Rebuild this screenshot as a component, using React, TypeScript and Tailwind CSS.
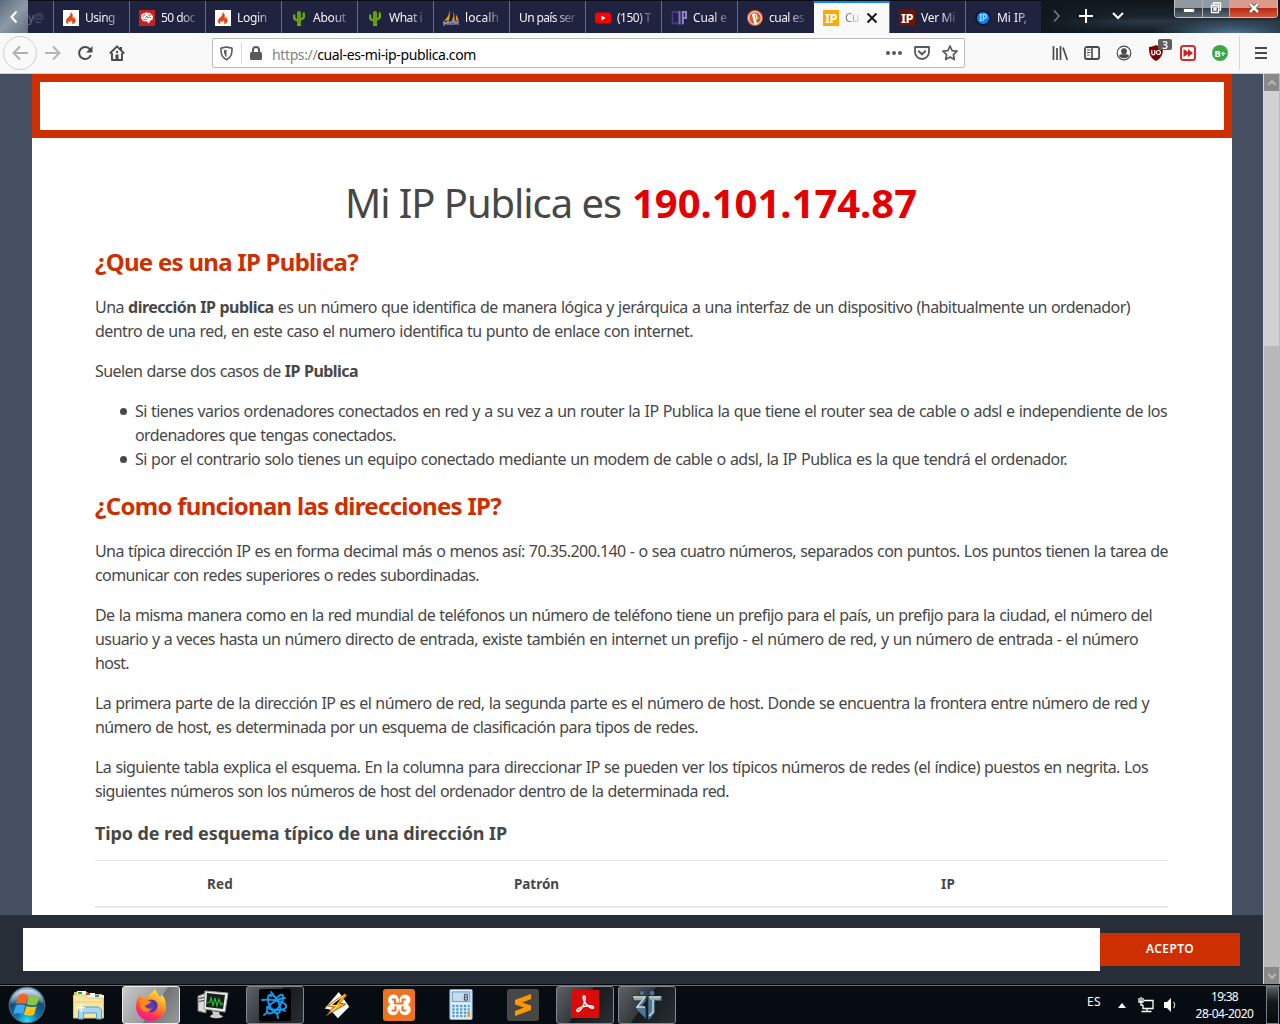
import { useLayoutEffect, useRef, type ReactNode } from "react";

/* One line of text whose tracking is adjusted so that it fills `w` pixels. */
function Line({ w, className = "", children }: { w: number; className?: string; children: ReactNode }) {
  const ref = useRef<HTMLSpanElement>(null);
  useLayoutEffect(() => {
    const el = ref.current;
    if (!el) return;
    el.style.letterSpacing = "0px";
    const natural = el.getBoundingClientRect().width;
    const count = (el.textContent || "").length;
    el.style.letterSpacing = `${(w - natural) / count}px`;
  }, [w]);
  return (
    <span className={`block whitespace-nowrap ${className}`}>
      <span ref={ref} className="relative -top-px inline-block">{children}</span>
    </span>
  );
}

function Flame() {
  return (
    <svg viewBox="0 0 16 16" className="size-4">
      <path fill="#fff" d="M0 0h16v16H0z" />
      <path fill="#dd4814" d="M7.3 2c.8 1.700.2 2.800-1 4.200-1.500 1.700-3.300 2.800-3.300 5 0 1.700 1.200 2.600 2.700 3-1.100-1.200-.6-2.500.5-3.400-.2 1.200.5 1.600 1.100 1.400.9-.3.400-1.300.3-1.900 1.500.6 2.700 2.500 1.300 3.900 2-.5 3.600-1.500 3.700-3.300.1-1.600-1.300-2.500-1.200-4.300-.9.400-1.100 1.300-1 2.100-1-.4-.7-1.500-.6-2.600.1-1.800-.8-3.300-2.500-4.100z" />
    </svg>
  );
}
function Brain() {
  return (
    <svg viewBox="0 0 16 16" className="size-4">
      <path fill="#c9211e" d="M0 0h16v16H0z" />
      <path fill="#fff" d="M4 3.500 7 2.500l4 .5 3 3-.4 3.500L11 11l-1 2.500-2-2-4-.5L2 8l.3-3z" />
      <path fill="none" stroke="#c9211e" strokeWidth=".7" d="M3 6h2l1-2m0 4 2-2 1 2 2-1 1 1M4 9l2 .5L8 9m1-5 1 1.500L12 5" />
    </svg>
  );
}
function Cactus() {
  return (
    <svg viewBox="0 0 16 16" className="size-4">
      <g fill="none" stroke="#6ea80a" strokeLinecap="round">
        <path strokeWidth="4" d="M8 3v10" />
        <path strokeWidth="2.400" d="M3.200 5.500V8c0 1.500 1.500 2 4 2.400M12.800 3.500V7c0 1.500-1.500 2-4 2.500" />
      </g>
      <path stroke="#3c7a10" strokeWidth=".4" d="M7.300 2v12M9 2v12" />
      <path fill="#6ea80a" d="M6 14h4v2H6z" />
    </svg>
  );
}
function Sails() {
  return (
    <svg viewBox="0 0 16 16" className="size-4">
      <path fill="#f89c0e" d="M6.500 0C6.500 4 4.500 8 1 11l5-1c1-4 1-8 .5-10zM10 1c1 4 .5 7-1.500 10l3-.5c.3-3-.2-7-1.500-9.500zM12.500 4c.8 2 .8 4 .2 6h2.600c-.3-2-1.300-4.500-2.800-6z" />
      <path fill="none" stroke="#9a9ab5" strokeWidth="1.200" d="M1 16v-4l2 2 2-3v4m2 0v-3h2v3m2 0v-4l2 3 2-3v4M0 13l15-2" />
    </svg>
  );
}
function YouTube() {
  return (
    <svg viewBox="0 0 16 16" className="size-4">
      <rect y="2.500" width="16" height="11" rx="3" fill="#f00" />
      <path fill="#fff" d="m6.500 5.500 4 2.500-4 2.500z" />
    </svg>
  );
}
function Cip() {
  return (
    <svg viewBox="0 0 16 16" className="size-4">
      <path fill="none" stroke="#4a3991" strokeWidth="1.500" d="M6 4V1.700H1.500v11.800H6v-2" />
      <path fill="none" stroke="#8375c4" strokeWidth="2" d="M8.500 1v13.500" />
      <path fill="none" stroke="#8f83ca" strokeWidth="2" d="M11.800 14.500V2H15v6h-3" />
    </svg>
  );
}
function Duck() {
  return (
    <svg viewBox="0 0 16 16" className="size-4">
      <circle cx="8" cy="8" r="8" fill="#de5833" />
      <circle cx="8" cy="8" r="6.300" fill="none" stroke="#fff" />
      <path fill="#fff" d="M5 4.500C6 3 9 3 10 5l.5 3-1 2 1 3.500-3 .5L6 9z" />
      <path fill="#fdb913" d="M8 7.500h4l-1 1.500H8z" />
      <path fill="#43a047" d="m9 10 3 .2-.5 2L9 11.500z" />
      <circle cx="8.500" cy="6" r=".7" fill="#234" />
    </svg>
  );
}

function IpBox({ className }: { className: string }) {
  return (
    <span className={`flex size-4 items-center justify-center text-[13px] leading-none font-bold text-white ${className}`}>
      <span className="tracking-[-0.5px]">IP</span>
    </span>
  );
}

function Tab({ icon, title, w, active = false }: { icon?: ReactNode; title: string; w: number; active?: boolean }) {
  return (
    <div
      className={
        active
          ? "flex w-[76px] shrink-0 items-center border-t-2 border-l border-t-[#0a84ff] border-l-[#202340] bg-[#f9f9fa] pl-[9px] text-[#555]"
          : "flex w-[76px] shrink-0 items-center border-l border-[#6b6b80] bg-[#202340] pt-0.5 pl-[9px] text-[#f4f4f8]"
      }
    >
      {icon && <span className="mr-1.5 shrink-0">{icon}</span>}
      <span
        className={
          active
            ? "w-[15px] pt-0.5 [mask-image:linear-gradient(to_right,#000c,#0003)]"
            : icon
              ? "mr-2 min-w-0 flex-1 pt-0.5 [mask-image:linear-gradient(to_right,#000_55%,#0002)]"
              : "mr-2 min-w-0 flex-1 pt-0.5 [mask-image:linear-gradient(to_right,#000_60%,#0002)]"
        }
      >
        <Line w={w} className="text-[12px] leading-4">{title}</Line>
      </span>
      {active && (
        <svg viewBox="0 0 12 12" className="ml-1.5 size-3 shrink-0">
          <path stroke="#111" strokeWidth="1.800" d="m1.500 1.500 9 9m0-9-9 9" />
        </svg>
      )}
    </div>
  );
}

function TitleBar() {
  return (
    <div className="flex h-[33px] items-end bg-[#10141e]">
      <div className="flex h-[33px] w-7 items-center justify-center bg-[linear-gradient(135deg,#5c6b7d,#8e9aa9_50%,#646d79)]">
        <svg viewBox="0 0 10 14" className="h-3.5 w-2.5"><path fill="none" stroke="#fff" strokeWidth="2" d="M7.500 1.500 2.500 7l5 5.500" /></svg>
      </div>
      <div className="flex h-full flex-1 flex-col">
        <div className="h-px bg-[#0a0d14]" />
        <div className="flex h-8 [&>*]:h-8">
          <div className="flex w-[25px] items-center bg-[#202340] pt-[3px] text-[12px] leading-4 text-[#6b6c82]">
            <Line w={15}>y<span className="text-[#4f5069]">@</span></Line>
          </div>
          <Tab icon={<Flame />} title="Using" w={30} />
          <Tab icon={<Brain />} title="50 doc" w={34} />
          <Tab icon={<Flame />} title="Login" w={30} />
          <Tab icon={<Cactus />} title="About" w={33} />
          <Tab icon={<Cactus />} title="What i" w={33} />
          <Tab icon={<Sails />} title="localh" w={34} />
          <Tab title="Un país ser" w={56} />
          <Tab icon={<YouTube />} title="(150) T" w={34} />
          <Tab icon={<Cip />} title="Cual e" w={34} />
          <Tab icon={<Duck />} title="cual es" w={35} />
          <Tab icon={<IpBox className="bg-[#fbab00]" />} title="Cu" w={14} active />
          <Tab icon={<IpBox className="bg-[#6b1602]" />} title="Ver Mi" w={34} />
          <Tab
            icon={
              <span className="flex size-4 items-center justify-center rounded-full border-2 border-[#111827] bg-[#0a84ff] text-[8px] leading-none text-white">IP</span>
            }
            title="Mi IP,"
            w={30}
          />
          <div className="-mt-px flex !h-[33px] flex-1 items-center bg-[radial-gradient(ellipse_at_80%_100%,#4d7595_0%,transparent_30%),linear-gradient(to_right,#10181f,transparent_40%),linear-gradient(to_bottom,#10151c,#1a242d_50%,#2a3742_65%,#111920)]">
            <svg viewBox="0 0 10 14" className="-mt-px ml-[11px] h-3.5 w-2.5"><path fill="none" stroke="#777c83" strokeWidth="1.600" d="m2 1.500 5 5.500-5 5.500" /></svg>
            <svg viewBox="0 0 14 14" className="-mt-px ml-[17px] size-3.5"><path stroke="#fff" strokeWidth="2" d="M7 0v14M0 7h14" /></svg>
            <svg viewBox="0 0 14 10" className="-mt-px ml-[18px] h-2.5 w-3.5"><path fill="none" stroke="#fff" strokeWidth="2" d="m2 2 5 5 5-5" /></svg>
            <div className="ml-[49px] flex h-[18px] self-start overflow-hidden rounded-b-[4px] border border-t-0 border-[#bcc2c8]">
              <div className="flex w-[28px] items-center justify-center border-r border-[#aab0b6] bg-[linear-gradient(to_bottom,#9199a1_50%,#303b45_50%,#5b6771)]">
                <span className="mt-1 h-[5px] w-3 rounded-[1px] border border-[#555] bg-white" />
              </div>
              <div className="flex w-[27px] items-center justify-center border-r border-[#aab0b6] bg-[linear-gradient(to_bottom,#9199a1_50%,#303b45_50%,#5b6771)]">
                <svg viewBox="0 0 12 12" className="-mt-px size-3"><path fill="none" stroke="#fff" strokeWidth="1.400" d="M3.500 2.500V1h7v7H9M1.500 3.500h7v7h-7zM4 6h2v2H4z" /></svg>
              </div>
              <div className="flex w-[47px] items-center justify-center bg-[linear-gradient(to_bottom,#dc9a8c_48%,#b82b14_50%,#d5553a)]">
                <svg viewBox="0 0 12 10" className="-mt-0.5 h-2.5 w-3"><path stroke="#54393a" strokeWidth="4" d="m2 1 8 8m0-8L2 9" /><path stroke="#fff" strokeWidth="2.500" d="m2 1 8 8m0-8L2 9" /></svg>
              </div>
            </div>
          </div>
        </div>
      </div>
    </div>
  );
}

function Toolbar() {
  return (
    <div className="flex h-[41px] items-center border-b border-[#d0d0d0] bg-[#f9f9fa]">
      <div className="ml-[3px] flex size-[34px] items-center justify-center rounded-full border border-[#cfcfd0]">
        <svg viewBox="0 0 16 16" className="size-4"><path fill="none" stroke="#b0b0b0" strokeWidth="1.900" d="M16 8H1.500M8 1.500 1.500 8 8 14.500" /></svg>
      </div>
      <svg viewBox="0 0 16 16" className="ml-2 size-4"><path fill="none" stroke="#b5b5b5" strokeWidth="1.900" d="M0 8h14.500M8 1.500 14.500 8 8 14.500" /></svg>
      <svg viewBox="0 0 16 16" className="ml-4 size-4"><path fill="none" stroke="#4a4a4c" strokeWidth="2" d="M13 4.500A6 6 0 1 0 13.800 10" /><path fill="#4a4a4c" d="M15.500 1v6.500H9z" /></svg>
      <svg viewBox="0 0 16 16" className="ml-4 size-4">
        <path fill="none" stroke="#4a4a4c" strokeWidth="1.900" strokeLinejoin="round" d="M.8 8.500 8 1.300l7.200 7.200M3 8v7h10V8" />
        <path fill="#4a4a4c" d="M6.500 9.500h3V15h-3zM11 2h2v3h-2zM7 6h2v2H7z" />
      </svg>
      <div className="ml-[87px] flex h-[30px] w-[753px] items-center rounded-[2px] border border-[#bbb] bg-white">
        <svg viewBox="0 0 14 16" className="ml-[7px] h-[15px] w-[13px]"><path fill="none" stroke="#5a5a5c" strokeWidth="1.700" strokeLinejoin="round" d="M1 2.300C3 1.800 5 1.500 7 1c2 .5 4 .8 6 1.300 0 6-.8 10-6 12.500C1.800 12.300 1 8.300 1 2.300z" /><path fill="#5a5a5c" d="M7 4v8c-2.200-1.700-2.800-4-2.900-7.400z" /></svg>
        <div className="ml-2 h-[22px] w-px bg-[#ddd]" />
        <svg viewBox="0 0 12 14" className="ml-2 h-3.5 w-3"><rect y="6" width="12" height="8" rx="1.500" fill="#5a5a5c" /><path fill="none" stroke="#5a5a5c" strokeWidth="2" d="M3 7V4a3 3 0 0 1 6 0v3" /></svg>
        <span className="ml-[10px] w-[204px] pt-[5px] text-[14px] leading-5 text-black">
          <Line w={204}><span className="text-[#838386]">https://</span>cual-es-mi-ip-publica.com</Line>
        </span>
        <div className="ml-[410px] flex w-4 justify-between [&>i]:size-1 [&>i]:rounded-full [&>i]:bg-[#5a5a5c]"><i /><i /><i /></div>
        <svg viewBox="0 0 16 16" className="ml-3 size-4"><path fill="none" stroke="#5a5a5c" strokeWidth="1.800" strokeLinejoin="round" d="M1 2h14v5a7 7 0 0 1-14 0z" /><path fill="none" stroke="#5a5a5c" strokeWidth="2" strokeLinecap="round" d="m4.800 6.300 3.200 3 3.200-3" /></svg>
        <svg viewBox="0 0 16 16" className="ml-3 size-4"><path fill="none" stroke="#5a5a5c" strokeWidth="1.700" strokeLinejoin="round" d="m8 1 2.100 4.600 5 .6-3.700 3.400 1 5L8 12.100l-4.400 2.500 1-5L.9 6.200l5-.6z" /></svg>
      </div>
      <svg viewBox="0 0 16 16" className="ml-[87px] size-4"><path fill="none" stroke="#4a4a4c" strokeWidth="1.700" d="M1.500 1v14M5 3v12M8.500 1v14M11 2.500l4.300 12.500" /></svg>
      <svg viewBox="0 0 16 16" className="ml-4 size-4"><rect x=".9" y="2" width="14.200" height="12" rx="2" fill="none" stroke="#4a4a4c" strokeWidth="1.800" /><path stroke="#4a4a4c" strokeWidth="1.600" d="M8 2v12" /><path stroke="#4a4a4c" d="M3 5h3.500M3 7.500h3.500M3 10h2.500" /></svg>
      <svg viewBox="0 0 16 16" className="ml-4 size-4"><circle cx="8" cy="8" r="6.800" fill="none" stroke="#4a4a4c" strokeWidth="1.200" /><circle cx="8" cy="6.200" r="2.900" fill="#4a4a4c" /><path fill="#4a4a4c" d="M3 11c1-2 3-1.700 5-1.700s4-.3 5 1.700c-2.500 3-7.500 3-10 0z" /></svg>
      <div className="relative ml-4 size-4">
        <svg viewBox="0 0 16 16" className="size-4"><path fill="#800000" d="M8 0c2 1 4 1.800 7 2 0 6-.5 10.500-7 14C1.500 12.500 1 8 1 2c3-.2 5-1 7-2z" /><path fill="none" stroke="#fff" strokeWidth="1.200" d="M3.800 5v3.500c0 1.800 3 1.800 3 0V5" /><circle cx="10.400" cy="7.500" r="2" fill="none" stroke="#fff" strokeWidth="1.200" /></svg>
        <span className="absolute -top-1.5 left-[10px] flex h-[11px] w-3.5 items-center justify-center rounded-[2px] bg-[#5e5e5e] text-[10px] leading-none font-semibold text-white">3</span>
      </div>
      <svg viewBox="0 0 16 16" className="ml-4 size-4"><rect x="1" y="1" width="14" height="14" rx="2.500" fill="#fff" stroke="#d32b2b" strokeWidth="2" /><path fill="#c22" d="M3.500 4 8 7V4l5 4-5 4V9l-4.500 3z" /></svg>
      <span className="ml-4 flex size-4 items-center justify-center rounded-full bg-[#3fa648] text-[9px] leading-none font-bold text-white">B+</span>
      <div className="ml-[11px] h-[34px] w-px bg-[#d6d6d6]" />
      <div className="ml-[15px] flex flex-col gap-[3px] [&>i]:h-0.5 [&>i]:w-3 [&>i]:bg-[#4a4a4c]"><i /><i /><i /></div>
    </div>
  );
}

function Bullet() {
  return <i className="mt-[8px] mr-[8px] -ml-[15px] size-[7px] shrink-0 rounded-full bg-[#474747]" />;
}

function Article() {
  return (
    <main className="ml-8 h-full w-[1200px] overflow-hidden bg-white text-[16px] leading-6 text-[#474747]">
      <div className="h-16 border-8 border-[#cd2f00]" />
      <div className="ml-[63px] w-[1073px]">
        <h1 className="flex h-[78px] items-start justify-start pt-[42px] pl-[250px] text-[40px] leading-12">
          <span className="w-[287px] shrink-0 font-normal"><Line w={276}>Mi IP Publica es</Line></span>
          <b className="font-bold text-[#e50000]"><Line w={285}>190.101.174.87</Line></b>
        </h1>
        <h2 className="mt-[29px] h-[51px] pt-[3px] text-[24px] leading-[29px] font-bold text-[#cd2f00]"><Line w={263}>¿Que es una IP Publica?</Line></h2>
        <div className="[word-spacing:0.6px]">
          <p>
            <Line w={1035}>Una <b>dirección IP publica</b> es un número que identifica de manera lógica y jerárquica a una interfaz de un dispositivo (habitualmente un ordenador)</Line>
            <Line w={598}>dentro de una red, en este caso el numero identifica tu punto de enlace con internet.</Line>
          </p>
          <p className="mt-4"><Line w={263}>Suelen darse dos casos de <b>IP Publica</b></Line></p>
          <ul className="mt-4 pl-10">
            <li className="flex">
              <Bullet />
              <div>
                <Line w={1032}>Si tienes varios ordenadores conectados en red y a su vez a un router la IP Publica la que tiene el router sea de cable o adsl e independiente de los</Line>
                <Line w={261}>ordenadores que tengas conectados.</Line>
              </div>
            </li>
            <li className="flex">
              <Bullet />
              <Line w={932}>Si por el contrario solo tienes un equipo conectado mediante un modem de cable o adsl, la IP Publica es la que tendrá el ordenador.</Line>
            </li>
          </ul>
        </div>
        <h2 className="mt-5 h-12 text-[24px] leading-[29px] font-bold text-[#cd2f00]"><Line w={406}>¿Como funcionan las direcciones IP?</Line></h2>
        <div className="[word-spacing:0.6px]">
          <p>
            <Line w={1073}>Una típica dirección IP es en forma decimal más o menos así: 70.35.200.140 - o sea cuatro números, separados con puntos. Los puntos tienen la tarea de</Line>
            <Line w={384}>comunicar con redes superiores o redes subordinadas.</Line>
          </p>
          <p className="mt-4">
            <Line w={1057}>De la misma manera como en la red mundial de teléfonos un número de teléfono tiene un prefijo para el país, un prefijo para la ciudad, el número del</Line>
            <Line w={1043}>usuario y a veces hasta un número directo de entrada, existe también en internet un prefijo - el número de red, y un número de entrada - el número</Line>
            <Line w={34}>host.</Line>
          </p>
          <p className="mt-4">
            <Line w={1054}>La primera parte de la dirección IP es el número de red, la segunda parte es el número de host. Donde se encuentra la frontera entre número de red y</Line>
            <Line w={603}>número de host, es determinada por un esquema de clasificación para tipos de redes.</Line>
          </p>
          <p className="mt-4">
            <Line w={1053}>La siguiente tabla explica el esquema. En la columna para direccionar IP se pueden ver los típicos números de redes (el índice) puestos en negrita. Los</Line>
            <Line w={634}>siguientes números son los números de host del ordenador dentro de la determinada red.</Line>
          </p>
        </div>
        <h3 className="mt-4 h-10 text-[18px] leading-7 font-bold"><Line w={412}>Tipo de red esquema típico de una dirección IP</Line></h3>
        <div className="grid h-12 grid-cols-[250px_383px_440px] items-center border-t border-b-2 border-[#e6eaed] pt-[3px] text-center text-[13.5px] font-bold">
          <Line w={26}>Red</Line>
          <Line w={45}>Patrón</Line>
          <Line w={14}>IP</Line>
        </div>
      </div>
    </main>
  );
}

function Scrollbar() {
  return (
    <div className="flex w-[17px] shrink-0 flex-col border-l border-[#d8d8d8] bg-[#b9b9b9] pr-px">
      <div className="flex h-[17px] items-center justify-center bg-[#898989]"><svg viewBox="0 0 10 8" className="h-2 w-2.5"><path fill="none" stroke="#b8b8b8" strokeWidth="2" d="m1.500 6 3.500-4 3.500 4" /></svg></div>
      <div className="h-[255px] bg-[#d1d1d1]" />
      <div className="mt-auto flex h-[17px] items-center justify-center bg-[#898989]"><svg viewBox="0 0 10 8" className="h-2 w-2.5"><path fill="none" stroke="#b8b8b8" strokeWidth="2" d="m1.500 2 3.500 4 3.500-4" /></svg></div>
    </div>
  );
}

function Slot({ children, state = "idle" }: { children: ReactNode; state?: "idle" | "open" | "active" }) {
  const look =
    state === "active"
      ? "border border-[#eee] bg-[linear-gradient(125deg,#c9cacb,#97999b_55%,#717376_56%,#97999b)]"
      : state === "open"
        ? "border border-[#84878b] bg-[linear-gradient(125deg,#5e6266,#35393e_45%,#15191e_46%,#2a2e33)]"
        : "";
  return <div className={`flex h-[38px] w-[58px] shrink-0 items-center justify-center rounded-[3px] ${look}`}>{children}</div>;
}

function Taskbar() {
  return (
    <div className="flex h-10 items-center border-t border-[#05070a] bg-[#070c12] shadow-[inset_0_1px_0_#6b7077]">
      <svg viewBox="0 0 40 40" className="ml-2 size-[38px] shrink-0">
        <defs>
          <radialGradient id="orb" cx=".5" cy=".95" r=".9"><stop offset="0" stopColor="#19e6ff" /><stop offset=".35" stopColor="#1473a8" /><stop offset=".7" stopColor="#174a75" /><stop offset="1" stopColor="#8fb2ca" /></radialGradient>
          <linearGradient id="gloss" x2="0" y2="1"><stop stopColor="#fff" stopOpacity=".65" /><stop offset="1" stopColor="#fff" stopOpacity=".1" /></linearGradient>
        </defs>
        <circle cx="20" cy="20" r="18.800" fill="url(#orb)" stroke="#547187" />
        <path fill="url(#gloss)" d="M3 18C4-1 36-1 37 18c-9-3-22 4-34 0z" />
        <path fill="#f26522" d="M11 10c3.500-2.800 7-2.200 10-.5L18.600 19c-3-1.500-6.500-1.500-10 0z" />
        <path fill="#8cc63f" d="M22.200 10.200c3.300 1.500 7 1.700 11 0l-2.700 9.200c-4 1.500-7.500 1.300-10.800-.2z" />
        <path fill="#3fa9f5" d="M8.200 20.500c3.500-1.500 7-1.500 10 0l-2.600 9.200c-3-1.700-6.500-1.700-10 0z" />
        <path fill="#ffc20e" d="M19.400 21c3.300 1.500 6.800 1.500 10.600.2l-2.700 9c-3.800 1.500-7 1.300-10.500-.2z" />
      </svg>
      <div className="ml-[14px] flex gap-1">
        <Slot>
          <svg viewBox="0 0 34 32" className="h-8 w-[34px]">
            <path fill="#d8bd66" d="M2 3h13l2 2h13v23H2z" /><path fill="#fff" d="M5 2h9v6H5zm8 2h10v6H13zm10 2h9v5h-9z" />
            <path fill="#18a53b" d="M6 3h4v2H6z" /><path fill="#d33c2a" d="M14 4h4v2h-4z" /><path fill="#388bd9" d="M23 6h4v2h-4z" />
            <path fill="#f7e6a0" stroke="#dcc373" d="M1.500 6h12l2 3h16v20h-30z" /><path fill="#eed98b" d="M3 12h27v2H3z" />
            <path fill="#a9d7ef" stroke="#589ec8" d="M6.500 30v-9l3-3h17l3 3v9h-5v-6h-13v6z" /><path stroke="#fff" d="M9 14v9m-4-4.500h8m-7-3 6 6m0-6-6 6" />
          </svg>
        </Slot>
        <Slot state="active">
          <svg viewBox="0 0 32 32" className="size-8">
            <defs><linearGradient id="fox" x1=".8" y1="0" x2=".3" y2="1"><stop stopColor="#fff44f" /><stop offset=".4" stopColor="#ff9a1f" /><stop offset=".75" stopColor="#ff3750" /><stop offset="1" stopColor="#ef10a0" /></linearGradient></defs>
            <path fill="url(#fox)" d="M20 0c1 3 3 5 5 8 2-1 1-3 1-3 4 3 5 8 5 13a15 14 0 0 1-30 0c0-5 1-8 3-11l1-2 2 4c3-1 4 0 5 0 1-3 5-5 8-9z" />
            <circle cx="16" cy="17" r="6.500" fill="#6137bd" /><path fill="#ff8b16" d="M4 11c4-1 9-1 12 2-2 3-5 2-6 4 1 2 4 4 7 2-2 4-7 6-11 1z" /><path fill="#4d35a5" d="M17 11c5 0 7 5 4 9-1 2-4 3-5 2 4-2 5-6 1-8z" />
          </svg>
        </Slot>
        <Slot>
          <svg viewBox="0 0 34 32" className="h-8 w-[34px]">
            <path fill="#ddd" stroke="#777" d="m2 7 8-3v20l-8-2z" /><path fill="#333" d="m3 9 5-1v1L3 10zm0 3 5-1v1l-5 1z" /><path fill="#eee" stroke="#999" d="m9 2 23 2-3 19-21-3z" /><path fill="#172019" d="m11 4 18 2-2 14-17-2z" />
            <path fill="none" stroke="#24b53c" strokeWidth="1.200" d="m11 14 3-1 1-5 2 9 2-8 2 8 2-7 2 6 2-2" /><path fill="#ccc" d="m16 22 7 1 1 3 3 1c0 3-13 3-13 0l3-2z" />
          </svg>
        </Slot>
        <Slot state="open">
          <svg viewBox="0 0 32 32" className="size-8">
            <rect width="32" height="32" rx="2" fill="#000" />
            <g fill="none" stroke="#149bf0" strokeWidth="1.900" strokeLinejoin="round" strokeLinecap="round">
              <path d="M11 6c4-1 9 6 10 12s-2 8-6 5-6-9-6-13 1-5 3-3" />
              <path d="M3 11c8-1 18 0 23 4 3 3 0 6-6 6s-10-1-12-3" />
              <path d="M26 9C20 9 9 15 8 21c-1 4 3 5 8 1s9-11 8-15c-1-3-5 0-8 4" />
              <path d="m12 3 4 5m10 14-4-2m-4 4 1 5M9 23l-4 3" />
            </g>
          </svg>
        </Slot>
        <Slot><svg viewBox="0 0 32 32" className="size-7"><path fill="#fff" d="m18 1 12 17-13 13L8 21l-6-1z" /><path fill="#ffae1a" stroke="#9d4b04" d="M25 3 5 17l7 1-8 10 22-13-7-1 8-9z" /><path stroke="#ffe590" strokeWidth="1.500" d="M22 6 9 16l7 1-6 6" /></svg></Slot>
        <Slot>
          <svg viewBox="0 0 32 32" className="size-8">
            <rect width="32" height="32" rx="3" fill="#ed731e" />
            <g fill="#fff"><circle cx="10.500" cy="11" r="5.500" /><circle cx="22" cy="11" r="5.500" /><circle cx="10" cy="20.500" r="5.700" /><circle cx="22" cy="20.500" r="5.700" /><path d="M10 13h12v7H10z" /></g>
            <path fill="none" stroke="#ed731e" strokeWidth="2" strokeLinejoin="round" strokeLinecap="round" d="M9.500 10.500h2.500v4h7.500v-4H22M9.500 21.500h3V18m10 3.500h-3V18" />
            <path fill="#ed731e" d="m14 6 2 4.500L18 6zM14 26l2-4.500 2 4.500z" />
          </svg>
        </Slot>
        <Slot>
          <svg viewBox="0 0 24 32" className="h-[31px] w-6"><rect x=".5" y=".5" width="23" height="31" rx="1" fill="#e0effb" stroke="#74b1d8" /><rect x="3" y="3" width="18" height="10" fill="#c3dcf0" stroke="#7496ae" /><path fill="none" stroke="#345" d="M15.500 5.500h3v6h-3zm1 4 1-2" /><g stroke="#559dce" strokeWidth="2.500" strokeDasharray="2.500 1.500"><path d="M3 17.500h18M3 21h18M3 24.500h18M3 28h14" /></g><path stroke="#f29a23" strokeWidth="3" d="M20 23v6" /></svg>
        </Slot>
        <Slot><svg viewBox="0 0 32 32" className="size-8"><rect width="32" height="32" rx="3" fill="#474747" /><path fill="#ff9800" d="m8 11 16-6v5l-9 3.500 9 3V21L8 27v-5l9-3.500-9-3z" /></svg></Slot>
        <Slot state="open"><svg viewBox="0 0 28 28" className="-mt-0.5 size-7"><path fill="#d90b0b" d="M0 0h28v28H0z" /><path fill="none" stroke="#fff" strokeWidth="1.500" d="M12.500 6c3-1 1.500 6-.5 10-2 4-5 6.500-6 5-1-2 5-4.500 9-5s8 0 7.500 1.800c-.6 2-6-1.800-8-4.500S11.500 7 12.500 6z" /></svg></Slot>
        <Slot state="open">
          <svg viewBox="0 0 32 32" className="size-8"><g fill="#4f7794" stroke="#142b3c" strokeWidth=".7"><circle cx="11" cy="4" r="2.700" /><circle cx="21" cy="4" r="2.700" /><path d="M2 7h13v5l-5 6h5v12l-4-4-6-6v-3l5-5H2zM17 7h14v5h-7v12l-5 6-2 1V12z" /></g><path fill="none" stroke="#d1dfdf" strokeWidth="1.400" d="M2 8h12L6 18h8m4-10h12m-8 3v12l-4 4" /><path stroke="#c7b785" strokeWidth="1.300" d="M3 10h9m7 0h10" /></svg>
        </Slot>
      </div>
      <div className="ml-auto flex h-full items-center text-white">
        <span className="w-3.5 pb-1 text-[12px] leading-4"><Line w={14}>ES</Line></span>
        <svg viewBox="0 0 8 5" className="mt-[1px] ml-[17px] h-[5px] w-2"><path fill="#fff" d="m0 5 4-5 4 5z" /></svg>
        <svg viewBox="0 0 16 16" className="mt-[1px] ml-[12px] size-4"><path fill="none" stroke="#fff" strokeWidth="1.300" d="M6 3.500h9v8H5V8M3.500 14.500h10M9 12v2M1 1v4h4V1M3 0v8h2" /></svg>
        <svg viewBox="0 0 14 16" className="mt-[1px] ml-2.5 h-4 w-3.5"><path fill="#fff" d="M0 5h3l4-4v14l-4-4H0z" /><path fill="none" stroke="#ccc" strokeWidth="1.200" d="M9.500 5c1.500 1.500 1.500 4.500 0 6" /></svg>
        <div className="ml-[17px] flex w-[59px] flex-col items-center pt-0.5 text-[12px] leading-[17px]"><Line w={27}>19:38</Line><Line w={58}>28-04-2020</Line></div>
        <div className="mr-px ml-[12px] h-[38px] w-[13px] border border-[#777d82] bg-[linear-gradient(to_bottom,#5c6166,#16191c_40%,#080b0e)]" />
      </div>
    </div>
  );
}

export default function App() {
  return (
    <div className="flex h-[1024px] w-[1280px] flex-col overflow-hidden font-['Noto_Sans',sans-serif]">
      <TitleBar />
      <Toolbar />
      <div className="flex h-[910px]">
        <div className="flex w-[1263px] flex-col bg-[#454f61]">
          <div className="h-[841px]"><Article /></div>
          <div className="flex h-[69px] bg-[#272e38] pt-[13px] pl-[23px]">
            <div className="h-[43px] w-[1077px] bg-white" />
            <button className="mt-[5px] flex h-[33px] w-[140px] items-center justify-center bg-[#cd2f00] text-[12px] leading-4 font-semibold text-white"><Line w={48}>ACEPTO</Line></button>
          </div>
        </div>
        <Scrollbar />
      </div>
      <Taskbar />
    </div>
  );
}
